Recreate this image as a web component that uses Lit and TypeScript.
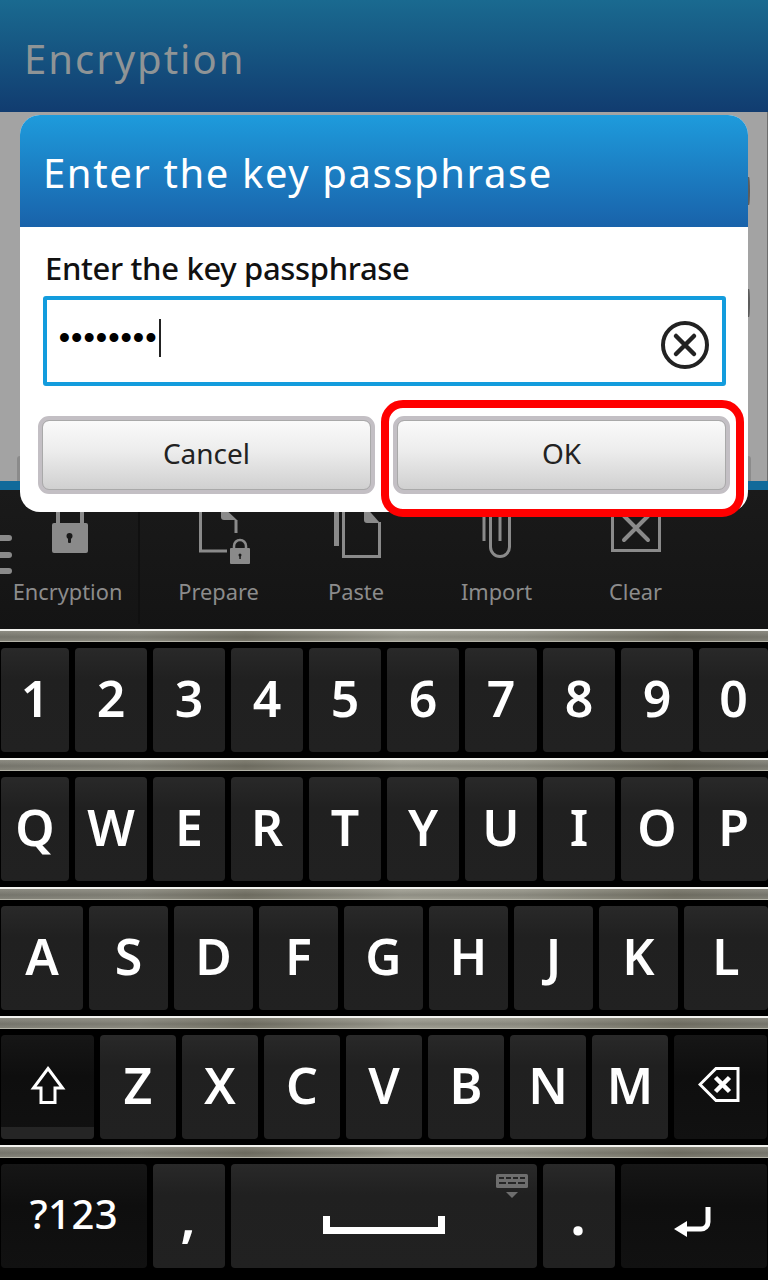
import { LitElement, html, css, svg } from "lit";
import { customElement } from "lit/decorators.js";

const lockIcon = svg`<svg viewBox="0 500 139 64" class="ic" fill="none">
  <path d="M58 525V508M82 525V508" stroke="#8a8a8a" stroke-width="4"/>
  <rect x="52" y="523" width="36" height="30" rx="2" fill="#8a8a8a"/>
  <circle cx="69.500" cy="536" r="3" fill="#191919"/><rect x="68" y="537" width="3" height="6" rx="1" fill="#191919"/>
</svg>`;
const prepareIcon = svg`<svg viewBox="149 500 139 64" class="ic" fill="none">
  <path d="M200.500 505V551H227" stroke="#8a8a8a" stroke-width="3"/>
  <path d="M236 520V533" stroke="#8a8a8a" stroke-width="3"/>
  <path d="M221 505V517a3 3 0 0 0 3 3H237L221 505Z" fill="#8a8a8a"/>
  <path d="M234 550v-4a6 6 0 0 1 12 0v4" stroke="#8a8a8a" stroke-width="2.500"/>
  <rect x="230" y="548" width="20" height="16" rx="1" fill="#8a8a8a"/>
  <circle cx="240" cy="555" r="1.500" fill="#191919"/><rect x="239.300" y="555" width="1.500" height="4" fill="#191919"/>
</svg>`;
const pasteIcon = svg`<svg viewBox="288 500 139 64" class="ic" fill="none">
  <path d="M336.500 505V546" stroke="#8a8a8a" stroke-width="5"/>
  <path d="M343.500 505V556.500H379.500V522" stroke="#8a8a8a" stroke-width="3"/>
  <path d="M364 505V520a3 3 0 0 0 3 3H380Z" fill="#8a8a8a"/>
</svg>`;
const importIcon = svg`<svg viewBox="427 500 139 64" class="ic" fill="none" stroke="#8a8a8a" stroke-width="3">
  <path d="M484 505V541"/>
  <path d="M490.500 505V547a9.500 9.500 0 0 0 19 0V505"/>
  <path d="M500 505V541"/>
</svg>`;
const clearIcon = svg`<svg viewBox="566 500 139 64" class="ic" fill="none" stroke="#8a8a8a">
  <path d="M612.500 505V550.500H659.500V505" stroke-width="3"/>
  <path d="M624 516L648 540M648 516L624 540" stroke-width="4" stroke-linecap="round"/>
</svg>`;

const shift = svg`<svg class="kg" width="40" height="44" viewBox="0 0 40 44" fill="none">
  <path d="M20 3.500L34.500 23H27V37.500H13V23H5.500Z" stroke="#fff" stroke-width="3"/></svg>`;
const del = svg`<svg class="kg" width="46" height="40" viewBox="0 0 46 40" fill="none">
  <path d="M18 1.500H40V33.500H18L2 17.500Z" stroke="#fff" stroke-width="3"/>
  <path d="M17.500 10.500L31.500 24.500M31.500 10.500L17.500 24.500" stroke="#fff" stroke-width="4.500"/></svg>`;
const enter = svg`<svg class="kg" width="40" height="36" viewBox="0 0 40 36" fill="none">
  <path d="M36 2V17a7 7 0 0 1-7 7H12" stroke="#fff" stroke-width="5"/>
  <path d="M2 24L15 16V32Z" fill="#fff"/></svg>`;
const space = svg`<svg class="kg" width="122" height="24" viewBox="0 0 122 24" fill="#fff">
  <path d="M0 4H7V15H115V4H122V22H0Z"/></svg>`;
const kbd = svg`<svg class="kbd" width="34" height="26" viewBox="0 0 34 26">
  <rect x="1" y="0" width="32" height="14" rx="1.500" fill="#6e6e6e"/>
  <path d="M4 3h5v2H4zM11 3h5v2h-5zM18 3h5v2h-5zM25 3h5v2h-5zM4 8h7v2H4zM13 8h8v2h-8zM23 8h7v2h-7z" fill="#262626"/>
  <path d="M11 18H23L17 24Z" fill="#6e6e6e"/></svg>`;

type K = { t?: string; g?: unknown; dark?: boolean; cls?: string };
const chars = (s: string): K[] => [...s].map((t) => ({ t }));

const rows: { cls: string; keys: K[] }[] = [
  { cls: "r1", keys: chars("1234567890") },
  { cls: "r1", keys: chars("QWERTYUIOP") },
  { cls: "r3", keys: chars("ASDFGHJKL") },
  {
    cls: "r4",
    keys: [{ g: shift, dark: true, cls: "shift" }, ...chars("ZXCVBNM"), { g: del, dark: true }],
  },
  {
    cls: "r5",
    keys: [
      { t: "?123", dark: true, cls: "sym" },
      { t: ",", cls: "comma" },
      { g: space, cls: "space" },
      { t: ".", cls: "period" },
      { g: enter, dark: true, cls: "enter" },
    ],
  },
];

const actions = [
  { label: "Encryption", icon: lockIcon, cls: "first" },
  { label: "Prepare", icon: prepareIcon, cls: "" },
  { label: "Paste", icon: pasteIcon, cls: "nudge" },
  { label: "Import", icon: importIcon, cls: "" },
  { label: "Clear", icon: clearIcon, cls: "" },
];

@customElement("app-root")
export class AppRoot extends LitElement {
  static styles = css`
    :host { display: block; position: relative; width: 768px; height: 1280px; overflow: hidden; background: #000; font-family: "Noto Sans", sans-serif; }
    .header { height: 112px; box-sizing: border-box; padding: 34px 0 0 24px; background: linear-gradient(#1a6a90, #113c70); color: #8f9496; font-size: 40px; line-height: 50px; letter-spacing: 2px; }
    .body { height: 369px; background: #a3a3a3; border-right: 1px solid #6d6d6d; box-sizing: border-box; }
    .strip { height: 9px; background: #116a9a; }
    .bar { height: 139px; box-sizing: border-box; padding-top: 10px; display: flex; background: linear-gradient(#1a1a1a, #141414); position: relative; }
    .item { width: 139px; height: 124px; display: flex; flex-direction: column; align-items: center; color: #8c8c8c; font-size: 21.800px; line-height: 30px; }
    .item.first { border-right: 2px solid #101010; width: 138px; margin-right: 9px; box-sizing: content-box; }
    .ic { width: 139px; height: 64px; display: block; flex: none; }
    .item span { margin-top: 13px; }
    .item.first span, .item.nudge span { margin-right: 3px; }
    .burger { position: absolute; left: -6px; top: 45px; display: flex; flex-direction: column; gap: 10.500px; }
    .burger i { display: block; width: 18px; height: 6px; border-radius: 3px; background: #8a8a8a; }

    .kb { background: #000; height: 651px; }
    .sep { height: 13px; box-sizing: border-box; border-top: 2px solid #f2f2ee; border-bottom: 1px solid #b4b3a8;
      background: linear-gradient(rgba(255,255,255,.06), rgba(0,0,0,.12) 60%, rgba(0,0,0,.02)), linear-gradient(90deg, #85847a, #8f8e83 18%, #7a786b 32%, #a3a296 52%, #9a998d 68%, #7b796c 88%, #85847a); }
    .row { display: grid; column-gap: 6px; padding: 6px 0 6px 1px; height: 116px; box-sizing: border-box; }
    .r1 { grid-template-columns: 68px repeat(8, 72px) 69px; }
    .r3 { grid-template-columns: 82px repeat(7, 79px) 84px; }
    .r4 { grid-template-columns: 93px repeat(7, 76px) 93px; }
    .r5 { grid-template-columns: 146px 72px 306px 72px 146px; }
    .key { display: flex; align-items: center; justify-content: center; position: relative; box-sizing: border-box; padding-bottom: 5px; border-radius: 4px; background: linear-gradient(#292929, #202020 30%, #212121); color: #fff; font-size: 50px; font-weight: 600; line-height: 1; }
    .key.dark { background: linear-gradient(#161616, #0e0e0e 40%, #111); padding-bottom: 0; }
    .key.shift::after { content: ""; position: absolute; left: 0; right: 0; bottom: 0; height: 12px; background: #252525; border-radius: 0 0 4px 4px; }
    .key.sym { font-size: 40px; font-weight: 500; letter-spacing: .5px; padding-bottom: 4px; }
    .key.comma { font-size: 56px; align-items: flex-end; padding-bottom: 25px; padding-right: 2px; }
    .key.period { font-size: 60px; align-items: flex-end; padding-bottom: 26px; padding-right: 2px; }
    .key.space { padding-bottom: 0; }
    .key.space .kg { margin-top: 16px; }
    .key.enter .kg { margin-top: 14px; margin-left: -4px; }
    .kbd { position: absolute; right: 8px; top: 10px; }
    .kg { display: block; position: relative; z-index: 1; }

    .dialog { position: absolute; left: 20px; top: 115px; width: 728px; height: 397px; background: #fff; border-radius: 20px; overflow: hidden; }
    .dtitle { height: 112px; box-sizing: border-box; padding: 33px 0 0 23px; color: #fff; background: linear-gradient(#1e9bdc, #1962aa); font-size: 40px; line-height: 50px; letter-spacing: 1.600px; }
    .dbody { padding: 20px 18px 18px; }
    .label { margin-left: 7px; font-size: 31px; line-height: 42px; color: #111; font-weight: 500; letter-spacing: -.33px; }
    .input { margin: 7px 4px 0 5px; width: 683px; height: 90px; box-sizing: border-box; border: 4px solid #139cdd; border-radius: 3px; display: flex; align-items: center; position: relative; padding-left: 12px; }
    .dots { font-family: "Liberation Sans", sans-serif; font-size: 31px; font-weight: 700; letter-spacing: 1.500px; line-height: 30px; margin-top: -6px; color: #000; }
    .caret { width: 2px; height: 38px; background: #222; margin: -6px 0 0 1px; }
    .clear { position: absolute; right: 12px; top: 20px; filter: blur(.6px); }
    .btns { display: flex; gap: 18px; margin-top: 30px; }
    .btn { width: 337px; height: 78px; box-sizing: border-box; padding-bottom: 4px; border: 5px solid #c3bfc4; border-radius: 11px; background: linear-gradient(#fafafa, #ececec 45%, #d0d0d0); display: flex; align-items: center; justify-content: center; font-size: 28px; color: #222; outline: 1px solid #a9a9a9; outline-offset: -5px; }
    .ring { position: absolute; left: 381px; top: 400px; width: 363px; height: 117px; box-sizing: border-box; border: 8px solid #f00; border-radius: 22px; }
    .ghost { position: absolute; width: 2px; height: 28px; background: #5c5c5c; border-radius: 0 100% 100% 0; left: 748px; }
    .g1 { top: 177px; } .g2 { top: 289px; }
    .g3 { left: 17px; top: 456px; width: 3px; height: 25px; background: #8b8b8b; border-radius: 3px 0 0 0; }
    .g4 { left: 748px; top: 456px; width: 3px; height: 25px; background: #8b8b8b; border-radius: 0 3px 0 0; }
  `;

  private renderKey(k: K) {
    return html`<div class="key ${k.dark ? "dark" : ""} ${k.cls ?? ""}">
      ${k.t ?? k.g}${k.cls === "space" ? kbd : ""}
    </div>`;
  }

  render() {
    return html`
      <div class="header">Encryption</div>
      <div class="body"></div>
      <div class="strip"></div>
      <div class="bar">
        <div class="burger"><i></i><i></i><i></i></div>
        ${actions.map(
          (a) => html`<div class="item ${a.cls}">${a.icon}<span>${a.label}</span></div>`
        )}
      </div>
      <div class="kb">
        ${rows.map(
          (r) => html`<div class="sep"></div>
            <div class="row ${r.cls}">${r.keys.map((k) => this.renderKey(k))}</div>`
        )}
      </div>
      <div class="ghost g1"></div><div class="ghost g2"></div>
      <div class="ghost g3"></div><div class="ghost g4"></div>
      <div class="dialog">
        <div class="dtitle">Enter the key passphrase</div>
        <div class="dbody">
          <div class="label">Enter the key passphrase</div>
          <div class="input">
            <span class="dots">••••••••</span><span class="caret"></span>
            <svg class="clear" width="50" height="50" viewBox="0 0 50 50" fill="none" stroke="#222">
              <circle cx="25" cy="25" r="22" stroke-width="4"/>
              <path d="M16 16L34 34M34 16L16 34" stroke-width="4.500" stroke-linecap="round"/>
            </svg>
          </div>
          <div class="btns">
            <div class="btn">Cancel</div>
            <div class="btn">OK</div>
          </div>
        </div>
      </div>
      <div class="ring"></div>
    `;
  }
}
